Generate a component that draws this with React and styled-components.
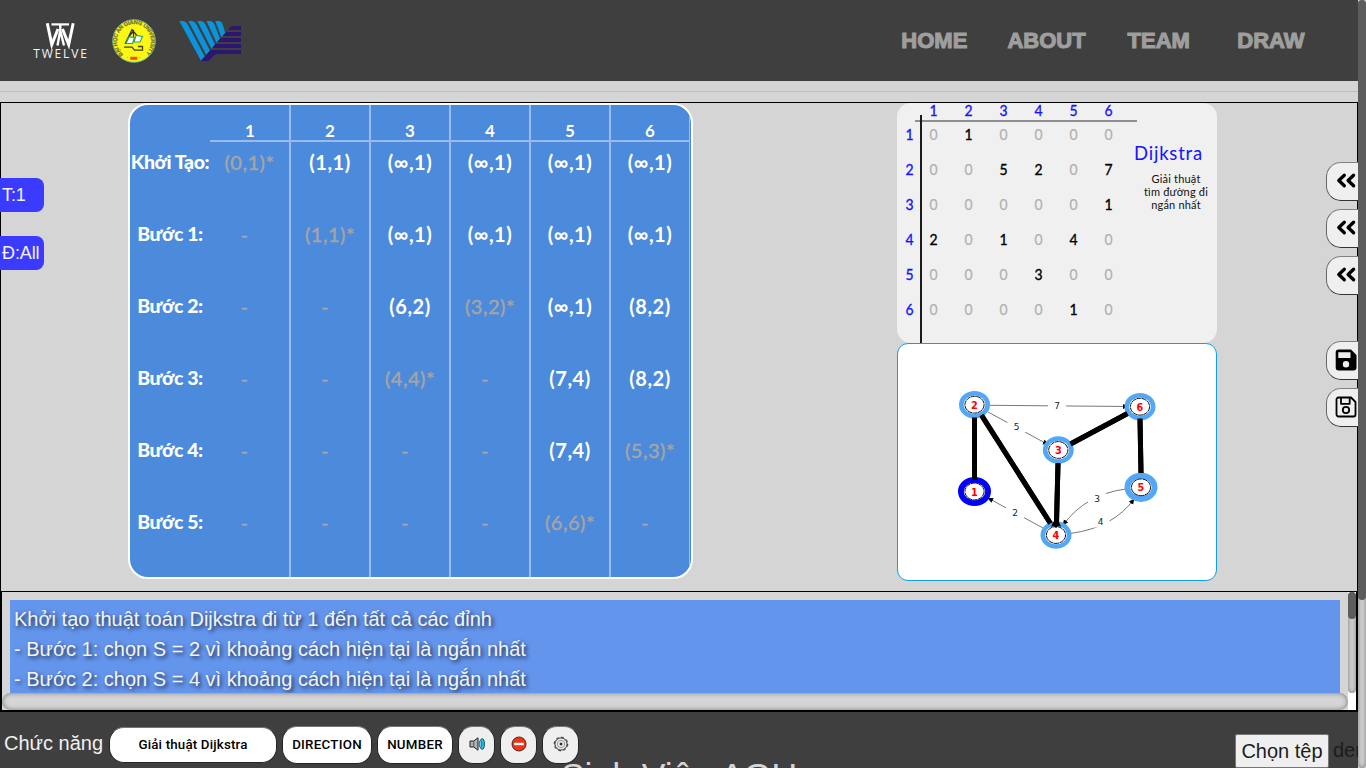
import React from "react";
import styled, { createGlobalStyle, css } from "styled-components";

const GlobalStyle = createGlobalStyle`
  * { box-sizing: border-box; }
  body { margin: 0; overflow: hidden; background: #d5d5d5; font-family: "Liberation Sans", Arial, sans-serif; }
`;

const Window = styled.div`
  display: flex;
  width: 1366px;
  height: 768px;
  overflow: hidden;
`;
const Page = styled.div`
  width: 1358px;
  height: 768px;
  display: flex;
  flex-direction: column;
  overflow: hidden;
`;

const trackShadow = css`
  background: #d5d5d5;
  box-shadow: inset 0 0 5px rgba(0, 0, 0, 0.45);
`;
const ScrollTrack = styled.div`
  width: 8px;
  height: ${(p) => p.$height}px;
  border-radius: 5px;
  ${trackShadow}
`;
const ScrollThumb = styled.div`
  height: ${(p) => p.$height}px;
  border-radius: 5px;
  background: #5c5c5c;
`;

const Header = styled.header`
  flex: 0 0 81px;
  background: #3f3f3f;
  display: flex;
  align-items: center;
  justify-content: space-between;
  padding: 0 31px 0 30px;
`;
const Logos = styled.div`
  display: flex;
  align-items: center;
`;
const Nav = styled.nav`
  display: grid;
  grid-template-columns: repeat(4, 112.2px);
`;
const NavLink = styled.a`
  text-align: center;
  font-size: 22px;
  font-weight: 700;
  color: #9e9e9e;
  -webkit-text-stroke: 1.1px #9e9e9e;
`;
const Strip = styled.div`
  flex: 0 0 21px;
  padding-top: 10px;
`;
const StripLine = styled.div`
  height: 1px;
  background: #bebebe;
`;

const Stage = styled.main`
  flex: 0 0 489px;
  display: flex;
  border: 1px solid #000;
  border-bottom: 0;
`;
const LeftRail = styled.aside`
  width: 127px;
  padding-top: 75px;
  display: flex;
  flex-direction: column;
  gap: 24px;
`;
const Badge = styled.div`
  width: 44px;
  height: 34px;
  margin-left: -1px;
  padding-left: 2px;
  border-radius: 0 8px 8px 0;
  background: #3b3bff;
  color: #f2f2f2;
  font-size: 18px;
  line-height: 34px;
  letter-spacing: -0.1px;
  white-space: nowrap;
`;

const StepsCard = styled.section`
  width: 565px;
  height: 476px;
  border: 2px solid #fff;
  border-radius: 20px;
  overflow: hidden;
  background: #4c8adb;
  font-family: Lato, sans-serif;
  color: #fff;
  display: flex;
`;
const StepColumn = styled.div`
  flex: 0 0 ${(p) => p.$width}px;
  border-right: ${(p) => p.$line}px solid #9bbbea;
`;
const StepHead = styled.div`
  height: 37px;
  padding: 15px 0 0 ${(p) => (p.$first ? 1 : 0)}px;
  border-bottom: ${(p) => (p.$blank ? 0 : 2)}px solid #9bbbea;
  text-align: center;
  font-size: 17px;
  line-height: 22px;
  font-weight: 700;
`;
const StepCell = styled.div`
  height: 72px;
  line-height: 40px;
  font-size: ${(p) => (p.$label ? 19.5 : 20)}px;
  text-align: center;
  white-space: nowrap;
  letter-spacing: ${(p) => (p.$label ? "-0.4px" : "0.5px")};
  font-weight: ${(p) => (p.$dim ? 400 : p.$label ? 900 : 700)};
  color: ${(p) => (p.$dim ? "#a5a5a5" : "#fff")};
  -webkit-text-stroke: ${(p) => (p.$dim ? "0.45px #a5a5a5" : "0")};
  padding-right: ${(p) => (p.$dash ? 10 : 0)}px;
`;

const SideColumn = styled.div`
  width: 320px;
  margin-left: 204px;
`;
const MatrixCard = styled.section`
  position: relative;
  height: 240px;
  border-radius: 14px;
  background: #f0f0f0;
  display: flex;
  padding-left: 5.5px;
  font-family: Lato, sans-serif;
  &::before, &::after { content: ""; position: absolute; }
  &::before { left: 18px; top: 17px; width: 222px; height: 2px; background: #8f8f8f; }
  &::after { left: 23px; top: 12px; width: 2px; bottom: 0; background: #1b1b1b; }
`;
const Matrix = styled.div`
  display: grid;
  grid-template-columns: 13px repeat(6, 35px);
  grid-template-rows: 14px repeat(6, 35px);
  align-content: start;
  text-align: center;
  font-size: 15px;
`;
const MatrixCell = styled.span`
  line-height: ${(p) => (p.$head ? 14 : 34)}px;
  color: ${(p) => (p.$axis ? "#1414ff" : p.$zero ? "#b0b0b0" : "#000")};
  -webkit-text-stroke: ${(p) => (p.$zero ? 0.2 : 0.35)}px currentColor;
  transform: scaleX(0.93);
`;
const Caption = styled.div`
  width: 86px;
  margin-left: 5px;
  padding: 39px 0 0;
  display: flex;
  flex-direction: column;
  text-align: center;
`;
const CaptionTitle = styled.div`
  padding-right: 10px;
  font-size: 18.5px;
  line-height: 22px;
  letter-spacing: 0.8px;
  color: #1414ff;
  white-space: nowrap;
`;
const CaptionText = styled.div`
  margin-top: 8px;
  padding-left: 5px;
  font-size: 11px;
  line-height: 13px;
  letter-spacing: 0.2px;
  color: #111;
`;
const GraphCard = styled.section`
  height: 238px;
  border: 1px solid #0ba1ee;
  border-radius: 11px;
  background: #fff;
  overflow: hidden;
  svg { display: block; }
`;

const RightRail = styled.aside`
  width: 32px;
  margin: 59px -1px 0 auto;
  overflow: hidden;
  display: flex;
  flex-direction: column;
  gap: 8px;
`;
const RailButton = styled.button`
  flex: 0 0 39px;
  width: 46px;
  margin: ${(p) => (p.$spaced ? 38 : 0)}px 0 0;
  padding: 0 0 1px 8px;
  display: flex;
  align-items: center;
  background: #efefef;
  border: 1px solid #333;
  border-top-color: #808080;
  border-left-color: #666;
  border-radius: 15px;
`;

const Log = styled.section`
  flex: 0 0 121px;
  border: 2px solid #000;
  border-top-width: 1px;
  display: grid;
  grid-template: 101px 17px / 1346px 8px;
  background: #fff;
`;
const LogView = styled.div`
  background: #d5d5d5;
  padding: 8px 8px 0;
  overflow: hidden;
`;
const LogText = styled.div`
  height: 93px;
  padding: 4px 4px 0;
  background: #6495ed;
  color: #f4f4f4;
  font-size: 20px;
  line-height: 30px;
  text-shadow: 2px 2px 4px rgba(0, 0, 0, 0.75);
`;
const HorizontalTrack = styled.div`
  border-radius: 10px;
  ${trackShadow}
`;
const HorizontalGutter = styled.div`
  background: #d5d5d5;
  display: grid;
`;

const Footer = styled.footer`
  position: relative;
  flex: 0 0 56px;
  background: #3f3f3f;
  display: flex;
  align-items: flex-start;
  padding: 14px 0 0 4px;
  overflow: hidden;
`;
const FooterLabel = styled.span`
  width: 105px;
  margin-top: 6px;
  color: #f0f0f0;
  font-size: 20px;
  line-height: 23px;
`;
const ToolButton = styled.button`
  position: relative;
  z-index: 1;
  width: ${(p) => p.$width}px;
  height: ${(p) => (p.$select ? 36 : 38)}px;
  margin: ${(p) => (p.$select ? 1 : 0)}px 5px 0 0;
  padding: 0 0 2px;
  display: flex;
  align-items: center;
  justify-content: center;
  border: 1px solid #242424;
  border-top-color: #777;
  border-radius: 15px;
  background: ${(p) => (p.$icon ? "#efefef" : "#fff")};
  color: #000;
  font: 500 13.33px Roboto, sans-serif;
  letter-spacing: ${(p) => (p.$select ? 0.17 : 0.25)}px;
  white-space: nowrap;
`;
const NextHeading = styled.div`
  position: absolute;
  left: 0;
  right: 0;
  top: 44px;
  text-align: center;
  font-size: 35.5px;
  line-height: 41px;
  color: #d5d5d5;
`;
const FilePicker = styled.div`
  margin-left: auto;
  padding-top: 8px;
  width: 123px;
  display: flex;
  gap: 4px;
  font-size: 20px;
  line-height: 33px;
  color: #1c1c1c;
  white-space: nowrap;
  overflow: hidden;
`;
const FileButton = styled.div`
  flex: 0 0 94px;
  height: 34px;
  border: 1px solid #777;
  border-radius: 2px;
  background: #efefef;
  text-align: center;
`;

const STEPS = [
  { head: "1", cells: ["(0,1)*", "-", "-", "-", "-", "-"] },
  { head: "2", cells: ["(1,1)", "(1,1)*", "-", "-", "-", "-"] },
  { head: "3", cells: ["(∞,1)", "(∞,1)", "(6,2)", "(4,4)*", "-", "-"] },
  { head: "4", cells: ["(∞,1)", "(∞,1)", "(3,2)*", "-", "-", "-"] },
  { head: "5", cells: ["(∞,1)", "(∞,1)", "(∞,1)", "(7,4)", "(7,4)", "(6,6)*"] },
  { head: "6", cells: ["(∞,1)", "(∞,1)", "(8,2)", "(8,2)", "(5,3)*", "-"] },
];
const COLUMN_WIDTHS = [81, 80, 80, 80, 80, 79];
const STEP_LABELS = ["Khởi Tạo:", "Bước 1:", "Bước 2:", "Bước 3:", "Bước 4:", "Bước 5:"];
const MATRIX = ["010000", "005207", "000001", "201040", "000300", "000010"];
const NODES = [
  { id: 1, x: 974.5, y: 491.5, start: true },
  { id: 2, x: 974.5, y: 404.7 },
  { id: 3, x: 1058.3, y: 450 },
  { id: 4, x: 1056, y: 535 },
  { id: 5, x: 1141, y: 487.3, wide: true },
  { id: 6, x: 1140, y: 406.7 },
];
const WEIGHTS = [
  { v: 7, x: 1057, y: 405.5 },
  { v: 5, x: 1016.5, y: 426.5 },
  { v: 2, x: 1015, y: 513 },
  { v: 3, x: 1097, y: 499 },
  { v: 4, x: 1100.5, y: 521.5 },
];

function TwelveLogo() {
  return (
    <svg width="60" height="44" viewBox="30 18 60 44">
      <g fill="none" stroke="#fff">
        <path d="M47.3 22.2L51.8 43.5L58 28M73.2 22.2L68.7 43.5L62.5 28" strokeWidth="3" />
        <path d="M51.5 23.4H69" strokeWidth="2.2" />
        <path d="M60.3 23V33M60 31L57.5 44.5M60.6 31L64 44.5" strokeWidth="2.4" />
      </g>
      <text x="33.3" y="57" fill="#f5f5f5" fontFamily="Open Sans" fontSize="12" textLength="53.5">TWELVE</text>
    </svg>
  );
}

const SealLogo = styled.svg`
  margin-left: 21px;
`;
function UniversityLogo() {
  return (
    <SealLogo width="46" height="46" viewBox="111 17 46 46">
      <circle cx="134" cy="40" r="21.3" fill="#fbf815" stroke="#66b6a3" strokeWidth="1" />
      <path id="sealArc" d="M123.2 53.4A17.1 17.1 0 1 1 144.8 53.4" fill="none" />
      <text fontSize="5.6" fontWeight="700" fill="#77752c" stroke="#77752c" strokeWidth=".25" fontFamily="Liberation Sans">
        <textPath href="#sealArc" textLength="82">ĐẠI HỌC AN GIANG UNIVERSITY</textPath>
      </text>
      <path d="M125 43L132 28.5L139 37M128.5 36L133.5 30V36" fill="none" stroke="#333014" strokeWidth="1.2" />
      <path d="M126 42.5L129 36L134.5 36.5L132.5 42.5ZM134 41L136 34.5L142.5 35.5L140 41Z" fill="#fff" stroke="#28a95a" strokeWidth="1.2" />
      <path d="M124 46.2H132L134.5 49.2H142.5V45.5H138" fill="none" stroke="#46430f" strokeWidth="1.3" />
      <rect x="130.3" y="55.8" width="7" height="3" fill="#f64a14" />
      <circle cx="127.5" cy="56.5" r=".6" fill="#66b6a3" />
      <circle cx="140" cy="56.5" r=".6" fill="#66b6a3" />
    </SealLogo>
  );
}

const BlueLogo = styled.svg`
  margin-left: 22px;
`;
function StripesLogo() {
  return (
    <BlueLogo width="64" height="44" viewBox="179 19 64 44">
      <g fill="#0b94db">
        <path d="M179.3 21H183Q186 21.4 187.5 24L204.7 56.5L201 60.7Z" />
        <path d="M188.3 21H192Q194.8 21.4 196.3 24L210 50.8L206.3 54.8Z" />
        <path d="M197.3 21H201Q203.8 21.4 205.3 24L215 44.5L211.7 48.9Z" />
        <path d="M206.5 21H210.5Q213 21.4 214.3 24L220 38.8L216.5 42.8Z" />
        <path d="M215.3 21H219.3Q221.5 21.4 222.5 24L225.3 33L221.5 37.3Z" />
      </g>
      <g fill="#2b176f">
        <path d="M241 26V30H227.8L230.5 27Q232 26 234 26Z" />
        <path d="M241 32V36H222.5L226.2 32Z" />
        <path d="M241 38V42H217.3L220.8 38Z" />
        <path d="M241 44V48H212L215.5 44Z" />
        <path d="M241 50V54H217.5Q215.5 54 214 55.5L209.5 60Q208.5 61 206.5 61H201L210.5 50Z" />
      </g>
    </BlueLogo>
  );
}

function ChevronsIcon() {
  return (
    <svg width="22" height="18" viewBox="0 0 22 18" fill="none" stroke="#000" strokeWidth="3.3" strokeLinecap="round" strokeLinejoin="round">
      <path d="M9.3 3.2L3.8 8.5L9.3 13.8M18.6 3.2L13.1 8.5L18.6 13.8" />
    </svg>
  );
}
function SaveSolidIcon() {
  return (
    <svg width="22" height="22" viewBox="0 0 22 22">
      <path fillRule="evenodd" d="M3.5 0.5H16L21.5 6V18.5A3 3 0 0 1 18.5 21.5H3.5A3 3 0 0 1 .7 18.5V3.5A3 3 0 0 1 3.5 .5ZM3.3 3.3V9H15.5V3.3ZM11 12A3.2 3.2 0 1 0 11 18.4A3.2 3.2 0 1 0 11 12Z" />
    </svg>
  );
}
function SaveOutlineIcon() {
  return (
    <svg width="22" height="22" viewBox="0 0 22 22" fill="none" stroke="#000" strokeWidth="1.8" strokeLinejoin="round">
      <path d="M3.5 1.5H16L20.5 6V18.5A2 2 0 0 1 18.5 20.5H3.5A2 2 0 0 1 1.5 18.5V3.5A2 2 0 0 1 3.5 1.5Z" />
      <path d="M6 1.5V7.8H14.7V1.5" />
      <circle cx="11" cy="14" r="3.2" />
    </svg>
  );
}
function SpeakerIcon() {
  return (
    <svg width="16" height="16" viewBox="0 0 16 16">
      <path d="M1 5H4.7L9 1.8V14.2L4.7 11H1Z" fill="#b0b0b0" stroke="#222" />
      <path d="M4.7 5V11" stroke="#555" />
      <ellipse cx="13.2" cy="8" rx="2.3" ry="5.4" fill="#31bce2" stroke="#164c60" strokeWidth=".9" />
      <ellipse cx="11.4" cy="8" rx="1.4" ry="3.5" fill="#5fd0ee" stroke="#17647c" strokeWidth=".9" />
    </svg>
  );
}
function StopIcon() {
  return (
    <svg width="16" height="16" viewBox="0 0 16 16">
      <circle cx="8" cy="8" r="7" fill="#ef3514" stroke="#3b1c16" strokeWidth=".9" />
      <path d="M3.2 8H12.8" stroke="#fff" strokeWidth="2.4" />
    </svg>
  );
}
function GearIcon() {
  return (
    <svg width="16" height="16" viewBox="0 0 16 16" fill="none" stroke="#222">
      <circle cx="8" cy="8" r="6.1" fill="#e8e8e8" strokeWidth=".9" />
      <circle cx="8" cy="8" r="6.8" strokeWidth="1" strokeDasharray="2.67 2.67" />
      <circle cx="8" cy="8" r="3.7" stroke="#888" strokeWidth=".8" />
      <circle cx="8" cy="8" r="1" fill="#111" />
    </svg>
  );
}

function Graph() {
  return (
    <svg width="318" height="236" viewBox="898 344 318 236">
      <defs>
        <marker id="arrow" viewBox="0 0 8 8" refX="7" refY="4" markerWidth="6" markerHeight="6" markerUnits="userSpaceOnUse" orient="auto">
          <path d="M0 0.5L8 4L0 7.5Z" />
        </marker>
      </defs>
      <g fill="none" stroke="#555" strokeWidth=".8">
        <path d="M990 405.3L1128 406.5" markerEnd="url(#arrow)" />
        <path d="M988 412L1048 444.5" markerEnd="url(#arrow)" />
        <path d="M1043 528L988 498" markerEnd="url(#arrow)" />
        <path d="M1126 489Q1086 494 1063 525" markerEnd="url(#arrow)" />
        <path d="M1070 533.5Q1113 528 1134 499" markerEnd="url(#arrow)" />
      </g>
      {WEIGHTS.map((w) => (
        <g key={w.v}>
          <rect x={w.x - 9} y={w.y - 6} width="18" height="12" fill="#fff" />
          <text x={w.x} y={w.y + 3.3} textAnchor="middle" fontSize="9" fontFamily="DejaVu Sans" fill="#222">{w.v}</text>
        </g>
      ))}
      <g stroke="#000" strokeWidth="5">
        <path d="M974.5 480V418" />
        <path d="M981.5 415.5L1050.5 523.5" />
        <path d="M1058 463.5L1056.5 523" />
        <path d="M1070.5 444L1127.5 413.5" />
        <path d="M1140 418.5L1141 473" />
      </g>
      {NODES.map((n) => (
        <g key={n.id}>
          <ellipse cx={n.x} cy={n.y} rx={n.start || n.wide ? 13.6 : 13.2} ry={n.start || n.wide ? 11.7 : 11.5} fill="#fff" stroke={n.start ? "#0000ff" : "#52a8f6"} strokeWidth={n.start || n.wide ? 5.8 : 4.6} />
          <ellipse cx={n.x} cy={n.y} rx="9.6" ry="8.4" fill="#fff" stroke="#111" strokeWidth="1" strokeDasharray="5 .5" />
          <text x={n.x} y={n.y + 4} textAnchor="middle" fontSize="11" fontWeight="700" fontFamily="DejaVu Sans" fill="#f00" textLength="6.8" lengthAdjust="spacingAndGlyphs">{n.id}</text>
        </g>
      ))}
      <g stroke="#000" strokeWidth="5">
        <path d="M974.5 480V417.5" />
        <path d="M981.5 415L1050.5 523.5" />
        <path d="M1058 463L1056.5 523" />
        <path d="M1070.5 444L1127.5 413.5" />
        <path d="M1140 418.5L1141 473" />
      </g>
      <path d="M1051 527L1053 522H1059L1061 527L1058.5 526L1056 528L1053.5 526Z" />
    </svg>
  );
}

export default function App() {
  return (
    <Window>
      <GlobalStyle />
      <Page>
        <Header>
          <Logos>
            <TwelveLogo />
            <UniversityLogo />
            <StripesLogo />
          </Logos>
          <Nav>
            {["HOME", "ABOUT", "TEAM", "DRAW"].map((t) => <NavLink key={t}>{t}</NavLink>)}
          </Nav>
        </Header>
        <Strip><StripLine /></Strip>
        <Stage>
          <LeftRail>
            <Badge>T:1</Badge>
            <Badge>Đ:All</Badge>
          </LeftRail>
          <StepsCard>
            <StepColumn $width={80} $line={0}>
              <StepHead $blank />
              {STEP_LABELS.map((l) => <StepCell key={l} $label>{l}</StepCell>)}
            </StepColumn>
            {STEPS.map((s, c) => (
              <StepColumn key={s.head} $width={COLUMN_WIDTHS[c]} $line={c === 5 ? 1 : 2}>
                <StepHead $first={c === 0}>{s.head}</StepHead>
                {s.cells.map((v, r) => (
                  <StepCell key={r} $dim={v === "-" || v.endsWith("*")} $dash={v === "-"}>{v}</StepCell>
                ))}
              </StepColumn>
            ))}
          </StepsCard>
          <SideColumn>
            <MatrixCard>
              <Matrix>
                <span />
                {[1, 2, 3, 4, 5, 6].map((n) => <MatrixCell key={n} $head $axis>{n}</MatrixCell>)}
                {MATRIX.map((row, r) => (
                  <React.Fragment key={r}>
                    <MatrixCell $axis>{r + 1}</MatrixCell>
                    {row.split("").map((v, c) => <MatrixCell key={c} $zero={v === "0"}>{v}</MatrixCell>)}
                  </React.Fragment>
                ))}
              </Matrix>
              <Caption>
                <CaptionTitle>Dijkstra</CaptionTitle>
                <CaptionText>Giải thuật<br />tìm đường đi<br />ngắn nhất</CaptionText>
              </Caption>
            </MatrixCard>
            <GraphCard><Graph /></GraphCard>
          </SideColumn>
          <RightRail>
            <RailButton><ChevronsIcon /></RailButton>
            <RailButton><ChevronsIcon /></RailButton>
            <RailButton><ChevronsIcon /></RailButton>
            <RailButton $spaced><SaveSolidIcon /></RailButton>
            <RailButton><SaveOutlineIcon /></RailButton>
          </RightRail>
        </Stage>
        <Log>
          <LogView>
            <LogText>
              Khởi tạo thuật toán Dijkstra đi từ 1 đến tất cả các đỉnh<br />
              - Bước 1: chọn S = 2 vì khoảng cách hiện tại là ngắn nhất<br />
              - Bước 2: chọn S = 4 vì khoảng cách hiện tại là ngắn nhất
            </LogText>
          </LogView>
          <ScrollTrack $height={101}><ScrollThumb $height={27} /></ScrollTrack>
          <HorizontalGutter><HorizontalTrack /></HorizontalGutter>
        </Log>
        <Footer>
          <FooterLabel>Chức năng</FooterLabel>
          <ToolButton $width={168} $select>Giải thuật Dijkstra</ToolButton>
          <ToolButton $width={90}>DIRECTION</ToolButton>
          <ToolButton $width={76}>NUMBER</ToolButton>
          <ToolButton $width={37} $icon><SpeakerIcon /></ToolButton>
          <ToolButton $width={37} $icon><StopIcon /></ToolButton>
          <ToolButton $width={37} $icon><GearIcon /></ToolButton>
          <NextHeading>Sinh Viên AGU</NextHeading>
          <FilePicker>
            <FileButton>Chọn tệp</FileButton>
            <span>demo.txt</span>
          </FilePicker>
        </Footer>
      </Page>
      <ScrollTrack $height={768}><ScrollThumb $height={600} /></ScrollTrack>
    </Window>
  );
}
